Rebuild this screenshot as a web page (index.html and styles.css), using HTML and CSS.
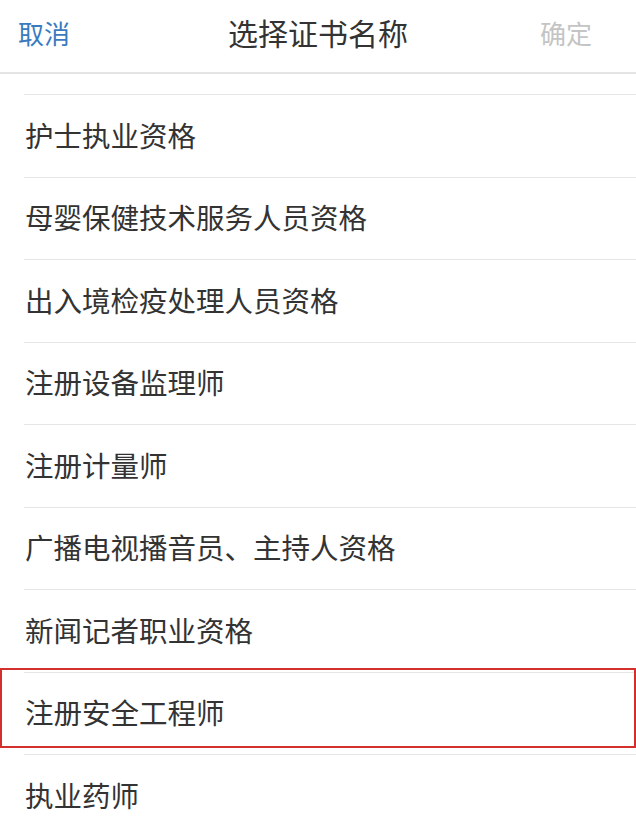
FILE: index.html
```html
<!DOCTYPE html>
<html lang="zh-CN">
<head>
  <meta charset="UTF-8">
  <title>选择证书名称</title>
  <link rel="stylesheet" href="styles.css">
</head>
<body>
  <div class="header">
    <span class="cancel">取消</span>
    <span class="title">选择证书名称</span>
    <span class="confirm">确定</span>
  </div>
  <ul class="list">
    <li class="item">护士执业资格</li>
    <li class="item">母婴保健技术服务人员资格</li>
    <li class="item">出入境检疫处理人员资格</li>
    <li class="item">注册设备监理师</li>
    <li class="item">注册计量师</li>
    <li class="item">广播电视播音员、主持人资格</li>
    <li class="item">新闻记者职业资格</li>
    <li class="item selected">注册安全工程师</li>
    <li class="item">执业药师</li>
  </ul>
</body>
</html>
```
FILE: styles.css
```css
body { margin: 0; background: #fff; font-family: "Noto Sans CJK SC", "Noto Sans", sans-serif; color: #333; overflow: hidden; }
.header { height: 74px; box-sizing: border-box; padding: 0 18px 8px; display: flex; align-items: center; justify-content: space-between; border-bottom: 2px solid #e4e4e4; }
.cancel { font-size: 26px; color: #3a7bc0; width: 100px; }
.title { font-size: 30px; color: #333; }
.confirm { font-size: 26px; color: #c4c4c4; width: 100px; text-align: right; padding-right: 26px; box-sizing: border-box; }
.list { list-style: none; margin: 0; padding: 20px 0 0; }
.item { position: relative; margin-left: 24px; padding: 0 0 3px 1px; height: 82.5px; box-sizing: border-box; border-top: 1px solid #e6e6e6; display: flex; align-items: center; font-size: 28.5px; }
.selected::after { content: ""; position: absolute; top: -5px; left: -24px; right: 0; height: 80px; box-sizing: border-box; border: 2px solid #d2302c; }
```
